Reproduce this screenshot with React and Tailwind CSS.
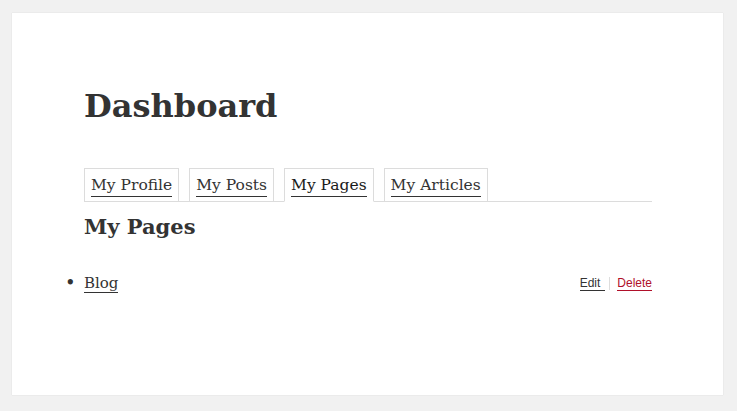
const tabs = ["My Profile", "My Posts", "My Pages", "My Articles"];

export default function App() {
  const active = "My Pages";

  return (
    <div className="min-h-[411px] w-full bg-[#f1f1f1] pt-[13px] pl-[12px] pr-[14px] pb-[16px]">
      <div
        className="h-[382px] bg-white pl-[72px] pr-[71px] pt-[70px] text-[#333] shadow-[0_0_1px_rgba(0,0,0,0.15)]"
        style={{ fontFamily: '"DejaVu Serif", "Liberation Serif", serif' }}
      >
        <h1 className="pt-[2px] text-[32px] font-bold leading-[42px]">Dashboard</h1>

        <div className="mt-[41px] flex gap-[10px] border-b border-[#dcdcdc]">
          {tabs.map((tab) => (
            <div
              key={tab}
              className={`-mb-px border border-[#dcdcdc] px-[6px] pt-[5px] pb-[4px] ${
                tab === active ? "border-b-white" : ""
              }`}
            >
              <a
                href="#"
                className={`block border-b border-[#333] text-[15.5px] leading-[22px] ${
                  tab === active ? "text-[#1a1a1a]" : "text-[#333]"
                }`}
              >
                {tab}
              </a>
            </div>
          ))}
        </div>

        <h2 className="mt-[10px] text-[21px] font-bold leading-[30px]">My Pages</h2>

        <ul className="mt-[29px] pl-0">
          <li className="flex items-center justify-between">
            <span className="relative">
              <span className="absolute left-[-19px] top-[-2px] text-[18px]">•</span>
              <a href="#" className="border-b border-[#333] text-[15px] leading-[22px]">
                Blog
              </a>
            </span>
            <span
              className="flex items-center text-[12px] leading-[14px]"
              style={{ fontFamily: '"Liberation Sans", Arial, sans-serif' }}
            >
              <a href="#" className="border-b border-[#333] pr-[5px] text-[#333]">
                Edit
              </a>
              <span className="ml-[4px] mr-[7px] h-[13px] w-px bg-[#ddd]" />
              <a href="#" className="border-b border-[#b0102a] text-[#b0102a]">
                Delete
              </a>
            </span>
          </li>
        </ul>
      </div>
    </div>
  );
}
